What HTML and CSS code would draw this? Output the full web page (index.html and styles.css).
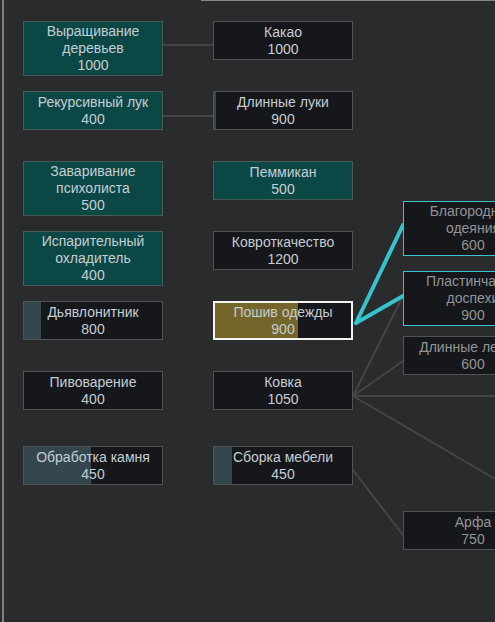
FILE: index.html
```html
<!DOCTYPE html>
<html lang="ru">
<head>
<meta charset="utf-8">
<title>Исследования</title>
<link rel="stylesheet" href="styles.css">
</head>
<body>
<div class="tree">
  <div class="frame-top"></div>
  <div class="frame-left"></div>
  <svg class="edges" width="495" height="622" viewBox="0 0 495 622">
    <g class="edge">
      <line x1="163" y1="45" x2="213" y2="45"/>
      <line x1="163" y1="116" x2="213" y2="116"/>
      <line x1="353" y1="396" x2="403" y2="296"/>
      <line x1="353" y1="396" x2="403" y2="361"/>
      <line x1="353" y1="396" x2="495" y2="396"/>
      <line x1="353" y1="396" x2="495" y2="479"/>
      <line x1="353" y1="470" x2="403" y2="535"/>
    </g>
    <g class="edge-active">
      <line x1="356" y1="323" x2="403" y2="225"/>
      <line x1="356" y1="323" x2="403" y2="296"/>
    </g>
  </svg>

  <div class="node done tall c1" style="top:21px"><span>Выращивание<br>деревьев<br>1000</span></div>
  <div class="node done c1" style="top:91px"><span>Рекурсивный лук<br>400</span></div>
  <div class="node done tall c1" style="top:161px"><span>Заваривание<br>психолиста<br>500</span></div>
  <div class="node done tall c1" style="top:231px"><span>Испарительный<br>охладитель<br>400</span></div>
  <div class="node c1" style="top:301px"><i class="fill" style="width:17px"></i><span>Дьявлонитник<br>800</span></div>
  <div class="node c1" style="top:371px"><span>Пивоварение<br>400</span></div>
  <div class="node c1" style="top:446px"><i class="fill" style="width:67px"></i><span>Обработка камня<br>450</span></div>

  <div class="node c2" style="top:21px"><span>Какао<br>1000</span></div>
  <div class="node c2" style="top:91px"><i class="fill" style="width:2px"></i><span>Длинные луки<br>900</span></div>
  <div class="node done c2" style="top:161px"><span>Пеммикан<br>500</span></div>
  <div class="node c2" style="top:231px"><span>Ковроткачество<br>1200</span></div>
  <div class="node selected c2" style="top:301px"><i class="fill gold" style="width:83px"></i><span>Пошив одежды<br>900</span></div>
  <div class="node c2" style="top:371px"><span>Ковка<br>1050</span></div>
  <div class="node c2" style="top:446px"><i class="fill" style="width:18px"></i><span>Сборка мебели<br>450</span></div>

  <div class="node locked linked tall c3" style="top:201px"><span>Благородные<br>одеяния<br>600</span></div>
  <div class="node locked linked tall c3" style="top:271px"><span>Пластинчатые<br>доспехи<br>900</span></div>
  <div class="node locked c3" style="top:336px"><span>Длинные лезвия<br>600</span></div>
  <div class="node locked c3" style="top:511px"><span>Арфа<br>750</span></div>
</div>
</body>
</html>
```

FILE: styles.css
```css
html, body {
  margin: 0;
  padding: 0;
  background: #2a2b2d;
}

.tree {
  position: relative;
  width: 495px;
  height: 622px;
  overflow: hidden;
  background: #2a2b2d;
  font-family: "Liberation Sans", Arial, sans-serif;
  font-size: 14px;
}

.frame-top {
  position: absolute;
  left: 201px;
  top: 0;
  right: 0;
  height: 1px;
  background: #858585;
}

.frame-left {
  position: absolute;
  left: 2px;
  top: 0;
  bottom: 0;
  width: 2px;
  background: #7f8081;
}

.edges {
  position: absolute;
  left: 0;
  top: 0;
}

.edge line {
  stroke: #444547;
  stroke-width: 2;
}

.edge-active line {
  stroke: #36c3ce;
  stroke-width: 4;
  stroke-linecap: round;
}

.node {
  position: absolute;
  box-sizing: border-box;
  width: 140px;
  height: 39px;
  border: 1px solid #505254;
  background: #15171b;
  color: #c6cdd4;
  display: flex;
  align-items: center;
  justify-content: center;
  text-align: center;
  line-height: 17px;
  overflow: hidden;
}

.node.tall {
  height: 55px;
}

.node span {
  position: relative;
  white-space: nowrap;
}

.c1 { left: 23px; }
.c2 { left: 213px; }
.c3 { left: 403px; }

.node.done {
  background: #0b4845;
  border-color: #4a5a59;
}

.node.locked {
  color: #939495;
}

.node.linked {
  border-color: #3bc4cf;
}

.node.selected {
  border: 2px solid #f4f4f0;
}

.fill {
  position: absolute;
  left: 0;
  top: 0;
  bottom: 0;
  background: #34474f;
}

.fill.gold {
  background: #74652a;
}
```
